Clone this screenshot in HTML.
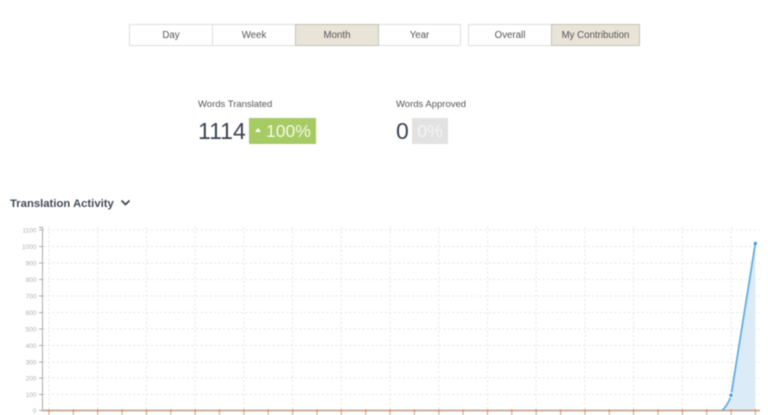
<!DOCTYPE html>
<html>
<head>
<meta charset="utf-8">
<style>
html,body{margin:0;padding:0;background:#fff}
body{width:768px;height:415px;overflow:hidden;position:relative;font-family:"Liberation Sans",sans-serif;color:#444}
#w{position:absolute;left:0;top:0;width:768px;height:415px;filter:blur(.4px)}
.b{position:absolute;top:24px;height:20px;line-height:21px;border:1px solid #dedede;background:#fff;text-align:center;font-size:9.7px;color:#555;box-sizing:content-box}
.a{background:#e8e4d8;border-color:#c6c3b6;color:#555}
.t{position:absolute;font-size:9.5px;color:#555;white-space:nowrap}
.n{position:absolute;font-size:23px;line-height:26px;color:#3c4350;white-space:nowrap}
.p{position:absolute;top:118px;height:26px;line-height:27px;color:#fff;font-size:17.500px;white-space:nowrap}
svg{position:absolute;left:0;top:0}
svg text{font-family:"Liberation Sans",sans-serif;font-size:6.500px;fill:#b0b0b0}
</style>
</head>
<body>
<div id="w">
<div class="b" style="left:129px;width:82px">Day</div>
<div class="b" style="left:212px;width:82px">Week</div>
<div class="b a" style="left:295px;width:82px">Month</div>
<div class="b" style="left:379px;width:81px;border-left:0">Year</div>
<div class="b" style="left:468px;width:82px">Overall</div>
<div class="b a" style="left:551px;width:87px">My Contribution</div>

<div class="t" style="left:198px;top:99px">Words Translated</div>
<div class="n" style="left:198px;top:118px">1114</div>
<div class="p" style="left:249px;width:67px;background:#a6cb63"><span style="position:absolute;left:6px;top:10px;width:0;height:0;border-left:3px solid transparent;border-right:3px solid transparent;border-bottom:4px solid #fff"></span><span style="position:absolute;left:17px;color:#f4f9e8">100%</span></div>
<div class="t" style="left:396px;top:99px">Words Approved</div>
<div class="n" style="left:396px;top:118px">0</div>
<div class="p" style="left:412px;width:36px;background:#e2e2e2;text-align:center;color:#f4f4f4">0%</div>

<div class="t" style="left:10px;top:197px;font-size:11.300px;font-weight:bold;color:#444b55;line-height:14px">Translation Activity</div>

<svg width="768" height="415" viewBox="0 0 768 415">
<path d="M121.500 200.500L125.500 204.500L129.500 200.500" fill="none" stroke="#3f4650" stroke-width="1.700"/>
<g stroke="#e6e6e6" stroke-width="1" stroke-dasharray="2 2.500" fill="none">
<path d="M43 230H760M43 246.500H760M43 263H760M43 279.500H760M43 296H760M43 312.500H760M43 329H760M43 345.500H760M43 362H760M43 378H760M43 394.500H760"/>
<path d="M49 227V411M97.700 227V411M146.400 227V411M195.200 227V411M243.900 227V411M292.600 227V411M341.300 227V411M390 227V411M438.800 227V411M487.500 227V411M536.200 227V411M584.900 227V411M633.600 227V411M682.400 227V411M731.100 227V411"/>
</g>
<path d="M42.500 227V411M39 227.500H42.500M39 230H42M39 246.500H42M39 263H42M39 279.500H42M39 296H42M39 312.500H42M39 329H42M39 345.500H42M39 362H42M39 378H42M39 394.500H42M39 410.500H42" stroke="#aaa" stroke-width="1" fill="none"/>
<g text-anchor="end">
<text x="36.500" y="232.300">1100</text><text x="36.500" y="248.800">1000</text><text x="36.500" y="265.300">900</text><text x="36.500" y="281.800">800</text><text x="36.500" y="298.300">700</text><text x="36.500" y="314.800">600</text><text x="36.500" y="331.300">500</text><text x="36.500" y="347.800">400</text><text x="36.500" y="364.300">300</text><text x="36.500" y="380.300">200</text><text x="36.500" y="396.800">100</text><text x="36.500" y="412.800">0</text>
</g>
<path d="M722 410.500C726 407 729 402 731.100 395.500L755.400 243V410.500Z" fill="#dcebf8"/>
<path d="M42 410.500H760" stroke="#bf9a84" stroke-width="1.500"/>
<path d="M49 411V415M73.400 411V415M97.700 411V415M122.100 411V415M146.400 411V415M170.800 411V415M195.200 411V415M219.500 411V415M243.900 411V415M268.200 411V415M292.600 411V415M317 411V415M341.300 411V415M365.700 411V415M390 411V415M414.400 411V415M438.800 411V415M463.100 411V415M487.500 411V415M511.800 411V415M536.200 411V415M560.600 411V415M584.900 411V415M609.300 411V415M633.600 411V415M658 411V415M682.400 411V415M706.700 411V415M731.100 411V415M755.400 411V415" stroke="#aaa" stroke-width="1"/>
<path d="M49 410.500h.01M73.400 410.500h.01M97.700 410.500h.01M122.100 410.500h.01M146.400 410.500h.01M170.800 410.500h.01M195.200 410.500h.01M219.500 410.500h.01M243.900 410.500h.01M268.200 410.500h.01M292.600 410.500h.01M317 410.500h.01M341.300 410.500h.01M365.700 410.500h.01M390 410.500h.01M414.400 410.500h.01M438.800 410.500h.01M463.100 410.500h.01M487.500 410.500h.01M511.800 410.500h.01M536.200 410.500h.01M560.600 410.500h.01M584.900 410.500h.01M609.300 410.500h.01M633.600 410.500h.01M658 410.500h.01M682.400 410.500h.01M706.700 410.500h.01M731.100 410.500h.01M755.400 410.500h.01" stroke="#f0905a" stroke-width="2.600" stroke-linecap="round"/>
<path d="M722 410.500C726 407 729 402 731.100 395.500L755.400 243" fill="none" stroke="#63aee4" stroke-width="1.800"/>
<circle cx="731.100" cy="395.200" r="2.800" fill="#fff"/>
<circle cx="731.100" cy="395.200" r="1.800" fill="#4fa3e0"/>
<circle cx="755.400" cy="243.500" r="1.800" fill="#4fa3e0"/>
</svg>
</div>
</body>
</html>
